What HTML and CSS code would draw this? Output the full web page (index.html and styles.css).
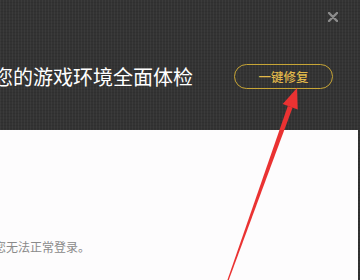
FILE: index.html
```html
<!DOCTYPE html>
<html lang="zh">
<head>
<meta charset="utf-8">
<link rel="stylesheet" href="styles.css">
</head>
<body>
<div class="page">
  <div class="header">
    <div class="close-row">
      <svg class="close" width="10" height="10" viewBox="0 0 10 10"><path d="M1 1L9 9M9 1L1 9" stroke="#8c8c8c" stroke-width="2.4" stroke-linecap="round"/></svg>
    </div>
    <div class="title-row">
      <div class="title">您的游戏环境全面体检</div>
      <div class="btn">一键修复</div>
    </div>
  </div>
  <div class="panel">
    <div class="msg">您无法正常登录。</div>
  </div>
  <svg class="arrow" width="360" height="280" viewBox="0 0 360 280">
    <polygon points="227.4,280 228.8,280 292.6,107.6 287.8,106 " fill="#ea3232"/>
    <polygon points="297,88 282.7,104.1 297.7,109.5" fill="#ea3232"/>
  </svg>
</div>
</body>
</html>
```
FILE: styles.css
```css
html, body {
  margin: 0;
  padding: 0;
}
body {
  width: 360px;
  height: 280px;
  overflow: hidden;
  background: #333333;
  font-family: "Noto Sans CJK SC", "Liberation Sans", sans-serif;
}
.page {
  position: relative;
  width: 360px;
  height: 280px;
  display: flex;
  flex-direction: column;
  background-color: #333333;
  background-image:
    linear-gradient(90deg, rgba(255,255,255,0.04) 50%, transparent 50%),
    linear-gradient(0deg, rgba(0,0,0,0.08) 50%, transparent 50%);
  background-size: 3px 3px, 3px 3px;
}
.header {
  height: 130px;
  flex: none;
  box-sizing: border-box;
  padding-top: 11px;
}
.close-row {
  display: flex;
  justify-content: flex-end;
  padding-right: 22px;
  height: 12px;
  align-items: center;
}
.close {
  display: block;
}
.title-row {
  display: flex;
  align-items: center;
  margin-top: 41px;
  height: 25px;
}
.title {
  margin-left: -7px;
  width: 241px;
  color: #ffffff;
  font-size: 20px;
  line-height: 25px;
  white-space: nowrap;
}
.btn {
  width: 99px;
  height: 25px;
  box-sizing: border-box;
  border: 1.5px solid #c7a536;
  border-radius: 13px;
  color: #e2b94a;
  font-size: 12.5px;
  font-weight: 500;
  display: flex;
  align-items: center;
  justify-content: center;
}
.panel {
  flex: 1;
  margin-right: 2px;
  background: #fdfcfd;
  padding-top: 109px;
  box-sizing: border-box;
}
.msg {
  margin-left: -6px;
  color: #8a8a8a;
  font-size: 12px;
  line-height: 16px;
  white-space: nowrap;
}
.arrow {
  position: absolute;
  left: 0;
  top: 0;
  pointer-events: none;
}
```
